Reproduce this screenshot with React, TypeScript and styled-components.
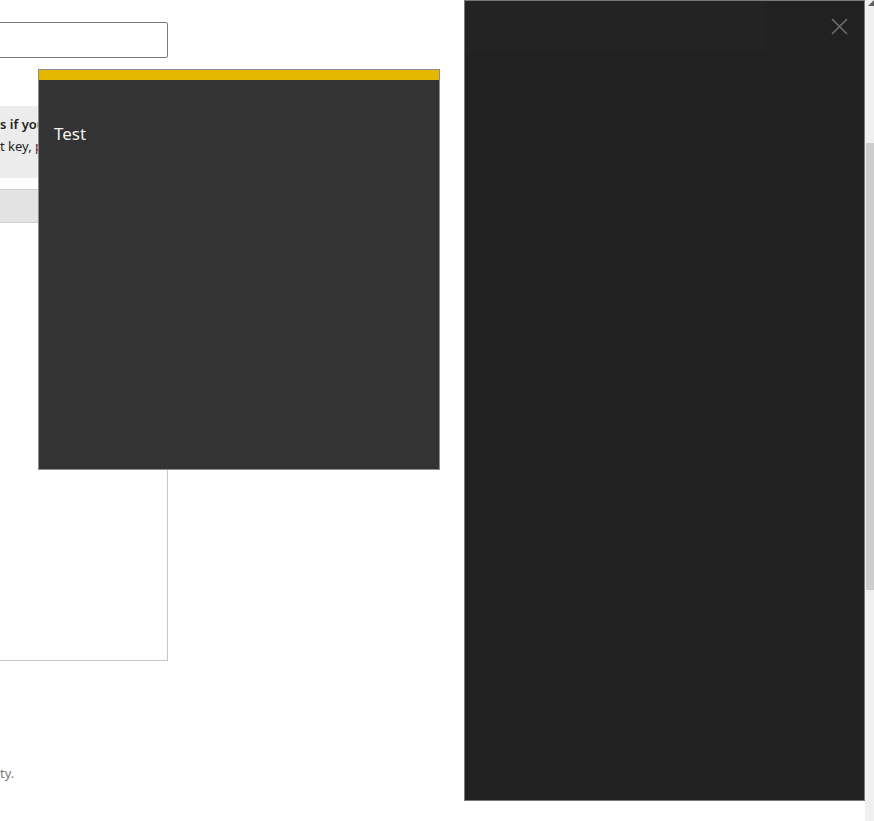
import React from 'react';
import styled, { createGlobalStyle } from 'styled-components';

const GlobalStyle = createGlobalStyle`
  html,
  body {
    margin: 0;
    padding: 0;
    background: #ffffff;
    overflow: hidden;
  }
  body {
    font-family: 'Noto Sans', 'Open Sans', Arial, sans-serif;
  }
`;

const Page = styled.div`
  position: relative;
  display: flex;
  width: 874px;
  height: 821px;
  overflow: hidden;
  background: #ffffff;
`;

const ContentArea = styled.div`
  flex: 0 0 464px;
  height: 100%;
  overflow: hidden;
`;

const Column = styled.div`
  width: 568px;
  margin-left: -400px;
  display: flex;
  flex-direction: column;
`;

const TextInput = styled.div`
  margin-top: 22px;
  height: 34px;
  border: 1px solid #7a7a7a;
  border-radius: 2px;
`;

const Notice = styled.div`
  margin-top: 48px;
  height: 72px;
  box-sizing: border-box;
  padding-top: 7px;
  background: #ececec;
  font-size: 13px;
  line-height: 22px;
  color: #222222;
`;

const NoticeLine = styled.div<{ $strong?: boolean }>`
  display: flex;
  padding-left: 400px;
  white-space: nowrap;
  font-weight: ${(p) => (p.$strong ? 600 : 400)};
`;

/* zero-width box: the text before the visible edge overflows to the left */
const Hidden = styled.span`
  display: flex;
  justify-content: flex-end;
  width: 0;
  white-space: nowrap;
`;

const Link = styled.a`
  color: #7a1640;
  text-decoration: none;
`;

const TabBar = styled.div`
  margin-top: 11px;
  height: 32px;
  background: #e3e3e3;
  border-top: 1px solid #cfcfcf;
  border-bottom: 1px solid #cfcfcf;
`;

const ListBox = styled.div`
  height: 437px;
  border: 1px solid #c6c6c6;
  border-top: none;
`;

const Footer = styled.div`
  display: flex;
  margin-top: 103px;
  padding-left: 400px;
  font-size: 13px;
  color: #7a7a7a;
  white-space: nowrap;
`;

const Dialog = styled.div`
  position: absolute;
  left: 38px;
  top: 69px;
  width: 400px;
  height: 399px;
  border: 1px solid #8c8c8c;
  background: #333333;
  display: flex;
  flex-direction: column;
`;

const DialogAccent = styled.div`
  height: 10px;
  background: #e5b800;
`;

const DialogBody = styled.div`
  padding: 42px 15px 0;
  font-size: 17px;
  color: #f2f2f2;
  line-height: 24px;
`;

const SidePanel = styled.div`
  flex: 0 0 399px;
  height: 799px;
  border: 1px solid #7a7a7a;
  background: #212121;
  display: flex;
`;

const PanelHeader = styled.div`
  width: 300px;
  height: 51px;
  background: #232323;
`;

const CloseButton = styled.button`
  margin: 16px 0 0 65px;
  width: 18px;
  height: 18px;
  padding: 0;
  border: none;
  background: transparent;
  cursor: pointer;
  display: flex;
  align-items: center;
  justify-content: center;
`;

const Scrollbar = styled.div`
  flex: 1;
  height: 100%;
  background: #f0f0f0;
  display: flex;
  flex-direction: column;
`;

const ScrollArrow = styled.div`
  height: 9px;
  padding-left: 3px;
  display: flex;
  align-items: flex-start;
`;

const ScrollThumb = styled.div<{ $top: number; $size: number }>`
  margin-top: ${(p) => p.$top}px;
  height: ${(p) => p.$size}px;
  margin-left: 1px;
  background: #cdcdcd;
`;

export default function App() {
  return (
    <>
      <GlobalStyle />
      <Page>
        <ContentArea>
          <Column>
            <TextInput />
            <Notice>
              <NoticeLine $strong>
                <Hidden>Contact one of the administrator</Hidden>
                <span>s if you need help signing in.</span>
              </NoticeLine>
              <NoticeLine>
                <Hidden>If you have lost your produc</Hidden>
                <span>
                  t key, <Link href="#">please contact support</Link>
                </span>
              </NoticeLine>
            </Notice>
            <TabBar />
            <ListBox />
            <Footer>
              <Hidden>By signing in you agree to the rules of this communi</Hidden>
              <span>ty.</span>
            </Footer>
          </Column>
        </ContentArea>

        <SidePanel>
          <PanelHeader />
          <CloseButton aria-label="Close">
            <svg width="17" height="17" viewBox="0 0 17 17">
              <path
                d="M1 1 L16 16 M16 1 L1 16"
                stroke="#6c6c6c"
                strokeWidth="1.6"
                fill="none"
              />
            </svg>
          </CloseButton>
        </SidePanel>

        <Scrollbar>
          <ScrollArrow>
            <svg width="6" height="7" viewBox="0 0 6 7">
              <path d="M0 6 L6 0 L6 6 Z" fill="#606060" />
            </svg>
          </ScrollArrow>
          <ScrollThumb $top={134} $size={447} />
        </Scrollbar>

        <Dialog>
          <DialogAccent />
          <DialogBody>Test</DialogBody>
        </Dialog>
      </Page>
    </>
  );
}
